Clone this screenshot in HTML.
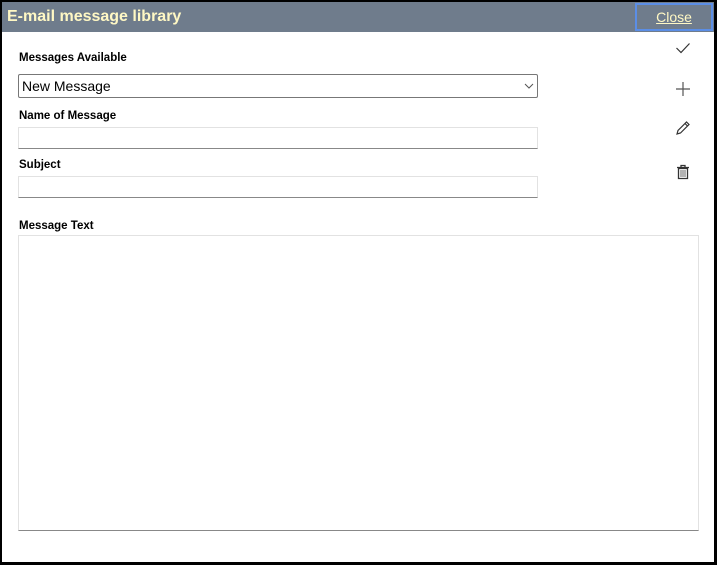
<!DOCTYPE html>
<html><head><style>
*{margin:0;padding:0;box-sizing:border-box}
body{width:717px;height:565px;background:#fff;position:relative;overflow:hidden;font-family:"Liberation Sans",Arial,sans-serif}
.frame{position:absolute;left:0;top:0;width:717px;height:565px;border:2px solid #000;border-right-width:3px;border-bottom-width:3px}
.hdr{position:absolute;left:2px;top:2px;width:712px;height:30px;background:#6f7c8c}
.title{position:absolute;left:7px;top:8px;font-size:16px;font-weight:bold;color:#fff8c4;line-height:18px}
.close{position:absolute;left:635px;top:3px;width:78px;height:28px;border:2px solid #5b8ee6;color:#fff8c4;font-size:14px;text-decoration:underline;text-align:center;line-height:24px}
.lbl{position:absolute;left:19px;font-size:11.5px;font-weight:bold;color:#000}
.sel{position:absolute;left:18px;top:74px;width:520px;height:24px;border:1px solid #777;border-radius:2px;font-size:14px;line-height:22px;padding-left:3px;color:#000}
.inp{position:absolute;left:18px;width:520px;height:22px;border:1px solid #e2e2e2;border-bottom:1px solid #888}
.ta{position:absolute;left:18px;top:235px;width:681px;height:296px;border:1px solid #e2e2e2;border-bottom:1px solid #888}
svg{position:absolute}
</style></head><body>
<div class="frame"></div>
<div class="hdr"></div>
<div class="title">E-mail message library</div>
<div class="close">Close</div>
<div class="lbl" style="top:52px">Messages Available</div>
<div class="sel">New Message</div>
<svg style="left:524px;top:82px" width="10" height="8"><path d="M1 2 L5 6 L9 2" fill="none" stroke="#555" stroke-width="1"/></svg>
<div class="lbl" style="top:110px">Name of Message</div>
<div class="inp" style="top:127px"></div>
<div class="lbl" style="top:159px">Subject</div>
<div class="inp" style="top:176px"></div>
<div class="lbl" style="top:220px">Message Text</div>
<div class="ta"></div>
<svg style="left:675px;top:41px" width="16" height="14"><path d="M1.5 7 L6 11.5 L14.5 2.5" fill="none" stroke="#333" stroke-width="1.2"/></svg>
<svg style="left:675px;top:81px" width="16" height="16"><path d="M8 1 V15 M1 8 H15" stroke="#555" stroke-width="1.2"/></svg>
<svg style="left:675px;top:120px" width="16" height="16"><path d="M2 14 L3 10.5 L11.5 2 L14 4.5 L5.5 13 Z M10 3.5 L12.5 6" fill="none" stroke="#333" stroke-width="1.2"/></svg>
<svg style="left:676px;top:164px" width="14" height="16"><path d="M1 3.5 H13 M5 3.5 V1.5 H9 V3.5" fill="none" stroke="#333" stroke-width="1.3"/><path d="M2.5 4.5 H11.5 V14.5 H2.5 Z" fill="none" stroke="#333" stroke-width="1.3"/><path d="M5 6 V13 M7 6 V13 M9 6 V13" stroke="#555" stroke-width="0.9"/></svg>
</body></html>
